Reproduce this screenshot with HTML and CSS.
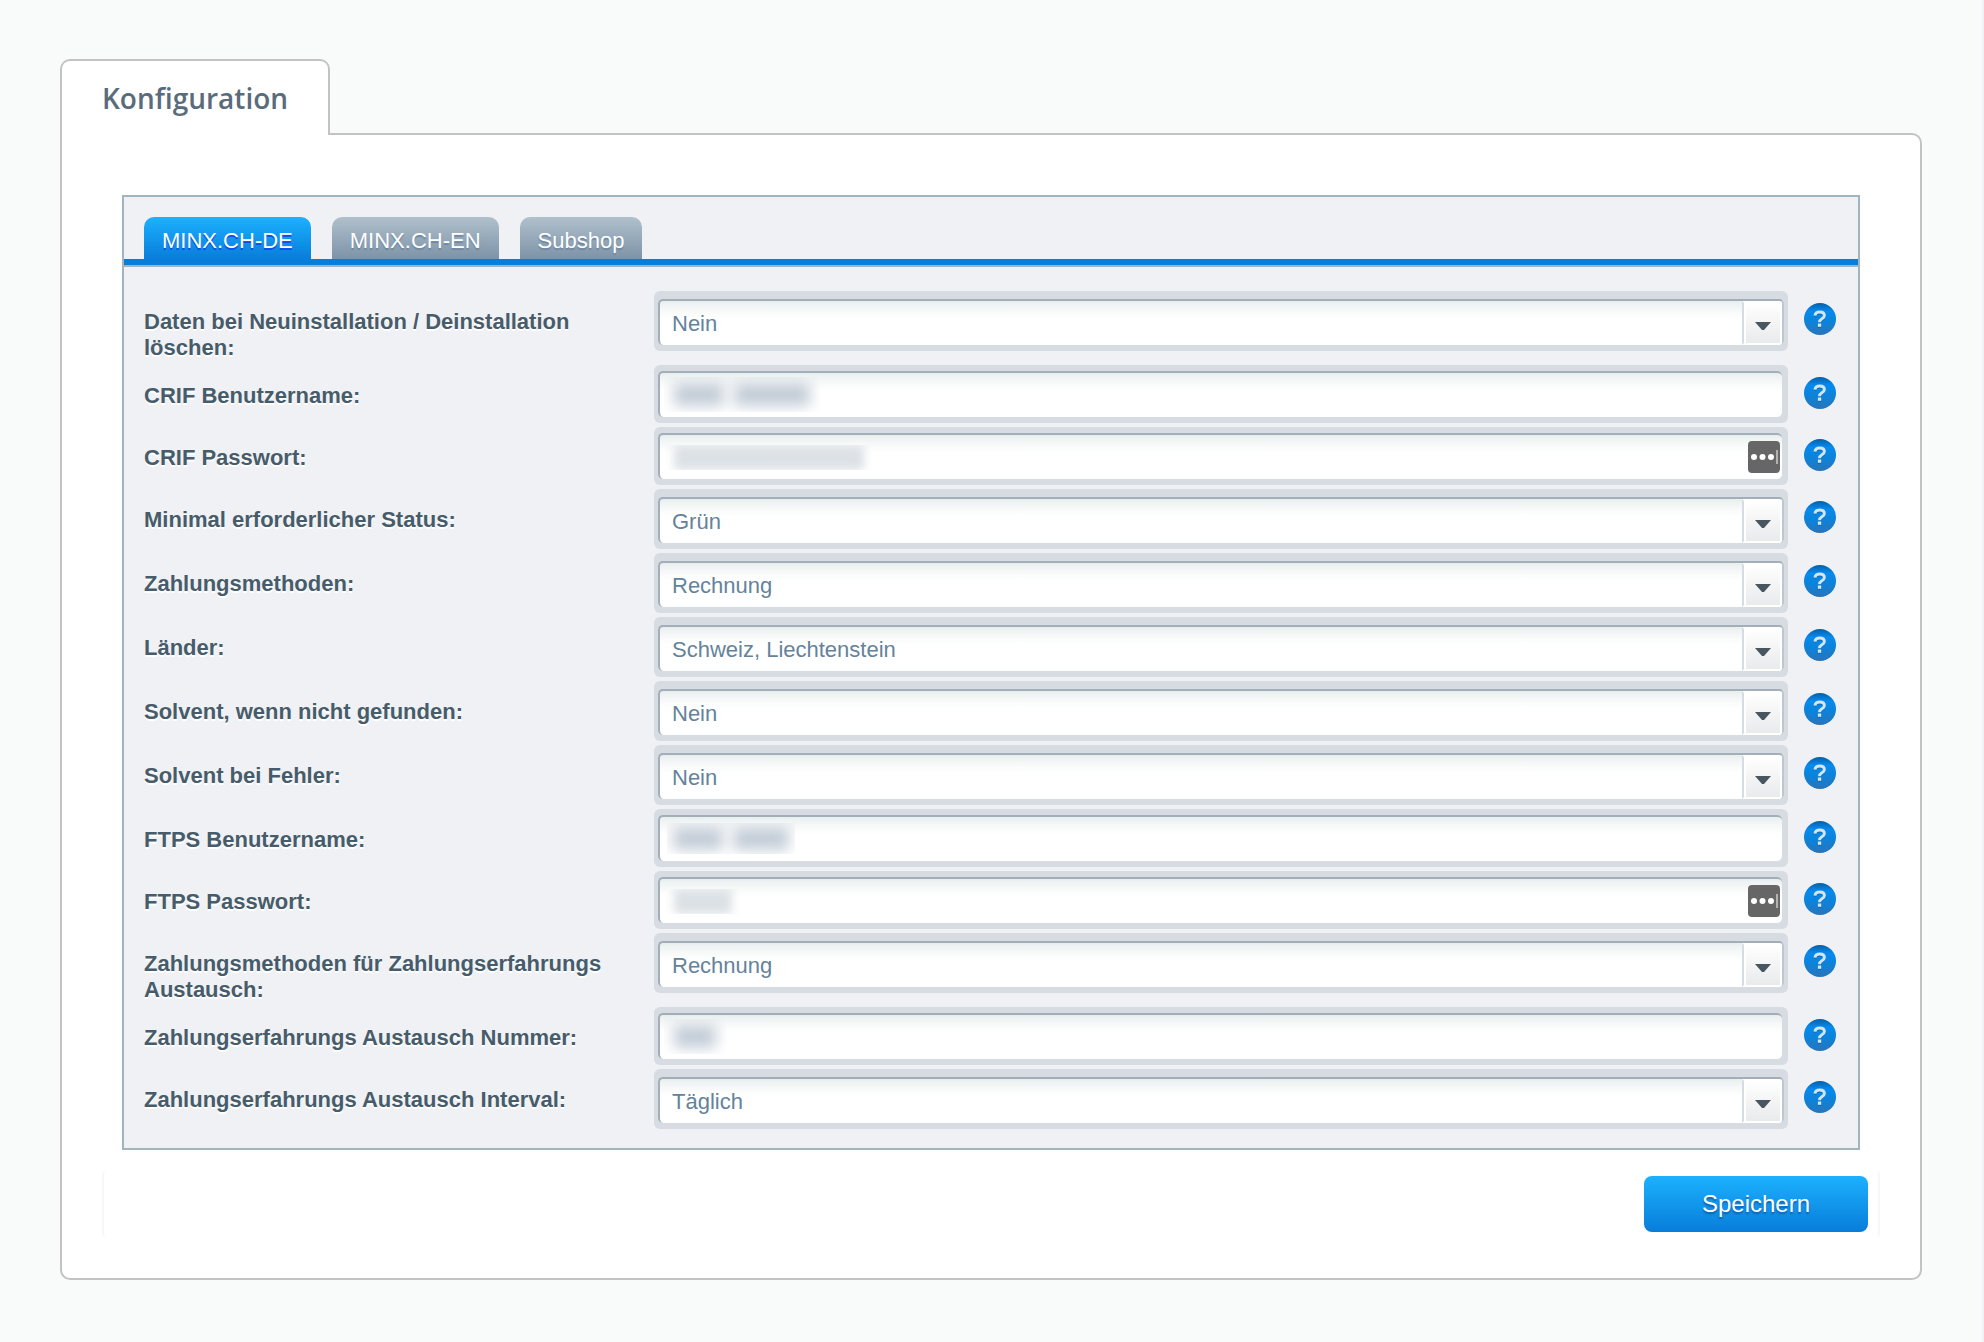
FILE: index.html
```
<!DOCTYPE html>
<html lang="de">
<head>
<meta charset="utf-8">
<title>Konfiguration</title>
<link rel="stylesheet" href="styles.css">
</head>
<body>
<svg class="defs" aria-hidden="true">
  <defs>
    <linearGradient id="help-fill" x1="0" y1="0" x2="0" y2="1">
      <stop offset="0" stop-color="#0460a8"/><stop offset=".25" stop-color="#0789ee"/><stop offset=".55" stop-color="#0a84dc"/><stop offset="1" stop-color="#2a74b8"/>
    </linearGradient>
    <symbol id="help" viewBox="0 0 32 32">
      <circle cx="16" cy="16" r="16" fill="url(#help-fill)"/>
      <g transform="translate(0 1)" opacity=".35"><path d="M11 12.600C11.300 10 13 8.900 15.700 8.900c2.900 0 4.700 1.400 4.700 3.700 0 3.500-4.900 3-4.900 6.600" fill="none" stroke="#03406f" stroke-width="3"/><rect x="13.900" y="20.500" width="3.300" height="3.300" fill="#03406f"/></g>
      <path d="M11 12.600C11.300 10 13 8.900 15.700 8.900c2.900 0 4.700 1.400 4.700 3.700 0 3.500-4.900 3-4.900 6.600" fill="none" stroke="#d0e6f5" stroke-width="3"/>
      <rect x="13.900" y="20.500" width="3.300" height="3.300" fill="#d0e6f5"/>
    </symbol>
    <symbol id="arrow" viewBox="0 0 16 9"><path d="M0 0h16L9 8H7z" fill="#475661"/></symbol>
    <symbol id="key" viewBox="0 0 32 32">
      <rect width="32" height="32" rx="4" fill="#666"/>
      <circle cx="6" cy="16" r="3" fill="#fff"/><circle cx="14.500" cy="16" r="3" fill="#fff"/><circle cx="23" cy="16" r="3" fill="#fff"/>
      <path d="M29 9v14" stroke="#ccc" stroke-width="1.500"/>
    </symbol>
  </defs>
</svg>
<main class="page">
  <h1 class="page-tab">Konfiguration</h1>
  <form class="card">
    <section class="panel">
      <div class="tabs" role="tablist">
        <button type="button" role="tab" aria-selected="true" class="tab active">MINX.CH-DE</button>
        <button type="button" role="tab" class="tab">MINX.CH-EN</button>
        <button type="button" role="tab" class="tab">Subshop</button>
      </div>
      <div class="fields">
        <div class="row"><label for="f1">Daten bei Neuinstallation / Deinstallation löschen:</label><div class="wrap combo"><select id="f1"><option>Nein</option></select><span class="trigger"><svg><use href="#arrow"/></svg></span></div><button type="button" class="help" aria-label="Hilfe"><svg><use href="#help"/></svg></button></div>
        <div class="row"><label for="f2">CRIF Benutzername:</label><div class="wrap"><input id="f2" type="text"><span class="masked user"><i></i><i></i></span></div><button type="button" class="help" aria-label="Hilfe"><svg><use href="#help"/></svg></button></div>
        <div class="row"><label for="f3">CRIF Passwort:</label><div class="wrap"><input id="f3" type="password"><span class="masked secret"><i></i></span><svg class="key"><use href="#key"/></svg></div><button type="button" class="help" aria-label="Hilfe"><svg><use href="#help"/></svg></button></div>
        <div class="row"><label for="f4">Minimal erforderlicher Status:</label><div class="wrap combo"><select id="f4"><option>Grün</option></select><span class="trigger"><svg><use href="#arrow"/></svg></span></div><button type="button" class="help" aria-label="Hilfe"><svg><use href="#help"/></svg></button></div>
        <div class="row"><label for="f5">Zahlungsmethoden:</label><div class="wrap combo"><select id="f5"><option>Rechnung</option></select><span class="trigger"><svg><use href="#arrow"/></svg></span></div><button type="button" class="help" aria-label="Hilfe"><svg><use href="#help"/></svg></button></div>
        <div class="row"><label for="f6">Länder:</label><div class="wrap combo"><select id="f6"><option>Schweiz, Liechtenstein</option></select><span class="trigger"><svg><use href="#arrow"/></svg></span></div><button type="button" class="help" aria-label="Hilfe"><svg><use href="#help"/></svg></button></div>
        <div class="row"><label for="f7">Solvent, wenn nicht gefunden:</label><div class="wrap combo"><select id="f7"><option>Nein</option></select><span class="trigger"><svg><use href="#arrow"/></svg></span></div><button type="button" class="help" aria-label="Hilfe"><svg><use href="#help"/></svg></button></div>
        <div class="row"><label for="f8">Solvent bei Fehler:</label><div class="wrap combo"><select id="f8"><option>Nein</option></select><span class="trigger"><svg><use href="#arrow"/></svg></span></div><button type="button" class="help" aria-label="Hilfe"><svg><use href="#help"/></svg></button></div>
        <div class="row"><label for="f9">FTPS Benutzername:</label><div class="wrap"><input id="f9" type="text"><span class="masked ftp"><i></i><i></i></span></div><button type="button" class="help" aria-label="Hilfe"><svg><use href="#help"/></svg></button></div>
        <div class="row"><label for="f10">FTPS Passwort:</label><div class="wrap"><input id="f10" type="password"><span class="masked secret short"><i></i></span><svg class="key"><use href="#key"/></svg></div><button type="button" class="help" aria-label="Hilfe"><svg><use href="#help"/></svg></button></div>
        <div class="row"><label for="f11">Zahlungsmethoden für Zahlungserfahrungs Austausch:</label><div class="wrap combo"><select id="f11"><option>Rechnung</option></select><span class="trigger"><svg><use href="#arrow"/></svg></span></div><button type="button" class="help" aria-label="Hilfe"><svg><use href="#help"/></svg></button></div>
        <div class="row"><label for="f12">Zahlungserfahrungs Austausch Nummer:</label><div class="wrap"><input id="f12" type="text"><span class="masked number"><i></i></span></div><button type="button" class="help" aria-label="Hilfe"><svg><use href="#help"/></svg></button></div>
        <div class="row"><label for="f13">Zahlungserfahrungs Austausch Interval:</label><div class="wrap combo"><select id="f13"><option>Täglich</option></select><span class="trigger"><svg><use href="#arrow"/></svg></span></div><button type="button" class="help" aria-label="Hilfe"><svg><use href="#help"/></svg></button></div>
      </div>
    </section>
    <footer class="actions"><button type="submit" class="save">Speichern</button></footer>
  </form>
</main>
</body>
</html>
```
FILE: styles.css
```
* { box-sizing: border-box; }

body {
  margin: 0;
  min-height: 100vh;
  background: #f9fbfb;
  border-right: 2px solid #f0f3f6;
  font: 22px/26px "Liberation Sans", Arial, sans-serif;
}

button, input, select { font: inherit; margin: 0; }

.defs { position: absolute; width: 0; height: 0; }

.page { padding: 59px 60px 60px; }

/* Page tab, joined to the card below it */
.page-tab {
  position: relative;
  z-index: 1;
  width: fit-content;
  margin: 0 0 -2px;
  padding: 18px 40px;
  border: 2px solid #c3c3c3;
  border-bottom: 0;
  border-radius: 10px 10px 0 0;
  background: #fff;
  color: #5a6c7c;
  font: 600 28px/38px "Open Sans", sans-serif;
}

.card {
  padding: 60px 40px 41px;
  border: 2px solid #c3c3c3;
  border-radius: 0 10px 10px 10px;
  background: #fff;
}

.panel {
  margin: 0 20px;
  border: 2px solid #a3b4c1;
  background: #f0f1f4;
}

.tabs {
  display: flex;
  gap: 21px;
  padding: 20px 20px 0;
  border-bottom: 6px solid #087dd9;
}

.tab {
  height: 42px;
  padding: 6px 18px 0;
  border: 0;
  border-radius: 10px 10px 0 0;
  background: linear-gradient(#b0c0cc, #7d93a7);
  color: #fff;
  text-shadow: 0 2px 1px #6f879f;
}

.tab.active {
  background: linear-gradient(#1cb1ff, #087dd9);
  text-shadow: 0 2px 0 #0a50e8;
}

.fields {
  display: flex;
  flex-direction: column;
  gap: 4px;
  padding: 24px 22px 19px 20px;
  border-top: 2px solid #a3b4c1;
}

.row {
  display: grid;
  grid-template-columns: 480px 1fr 32px;
  column-gap: 16px;
  align-items: start;
}

.row label {
  margin-right: -16px;
  padding: 18px 20px 0 0;
  color: #475c6a;
  font-weight: bold;
  text-shadow: 0 2px 0 #fff;
}

.wrap {
  position: relative;
  margin-left: 14px;
  padding: 6px 6px 6px 4px;
  border-radius: 6px;
  background: #d7dce3;
}

.combo { padding: 8px 4px 6px; }

.wrap input, .wrap select {
  display: block;
  width: 100%;
  height: 46px;
  padding: 2px 12px 0;
  border: 0 solid #a3afb8;
  border-width: 2px 0 0 2px;
  border-radius: 5px;
  background: linear-gradient(#e8eeee, #f6f8f8 8px, #fff 18px);
  color: #64839b;
  appearance: none;
  outline: 0;
}

.wrap select { border-right: 2px solid #bec7cf; }

.trigger {
  position: absolute;
  top: 10px;
  right: 6px;
  bottom: 6px;
  width: 40px;
  display: grid;
  place-items: center;
  padding: 6px 0 0 2px;
  border: 2px solid #fff;
  border-left-color: #d7dce3;
  border-radius: 0 3px 3px 0;
  background: linear-gradient(#fff, #e9eaec);
  box-shadow: inset 2px 0 #fff;
  pointer-events: none;
}

.trigger svg { width: 16px; height: 9px; }

.key { position: absolute; top: 14px; right: 8px; width: 32px; height: 32px; }

.help {
  width: 32px;
  height: 32px;
  margin-top: 12px;
  padding: 0;
  border: 0;
  border-radius: 50%;
  background: none;
}

.help svg { display: block; width: 32px; height: 32px; }

/* Values hidden behind a blur */
.masked {
  position: absolute;
  top: 12px;
  left: 10px;
  display: flex;
  gap: 10px;
  height: 35px;
  padding: 6px 10px;
  overflow: hidden;
  pointer-events: none;
}

.masked i { width: 50px; background: #c3cdd7; filter: blur(7px); }
.user i + i { width: 76px; }
.ftp { left: 13px; width: 128px; height: 31px; padding: 4px 6px; top: 14px; }
.ftp i + i { width: 56px; }
.number i { width: 42px; }
.secret { top: 18px; height: 25px; padding: 0 10px; }
.secret i { width: 190px; background: #dce1e5; filter: blur(5px); }
.short i { width: 58px; }

.actions {
  display: flex;
  justify-content: flex-end;
  margin-top: 21px;
  padding: 5px 10px;
  border: 0 solid #f7f7f8;
  border-width: 0 2px;
  border-radius: 4px;
}

.save {
  width: 224px;
  height: 56px;
  border: 0;
  border-radius: 8px;
  background: linear-gradient(#1cb1ff, #087dd9);
  color: #fff;
  font-size: 24px;
  text-shadow: 0 2px 2px #0a5cad;
}
```
